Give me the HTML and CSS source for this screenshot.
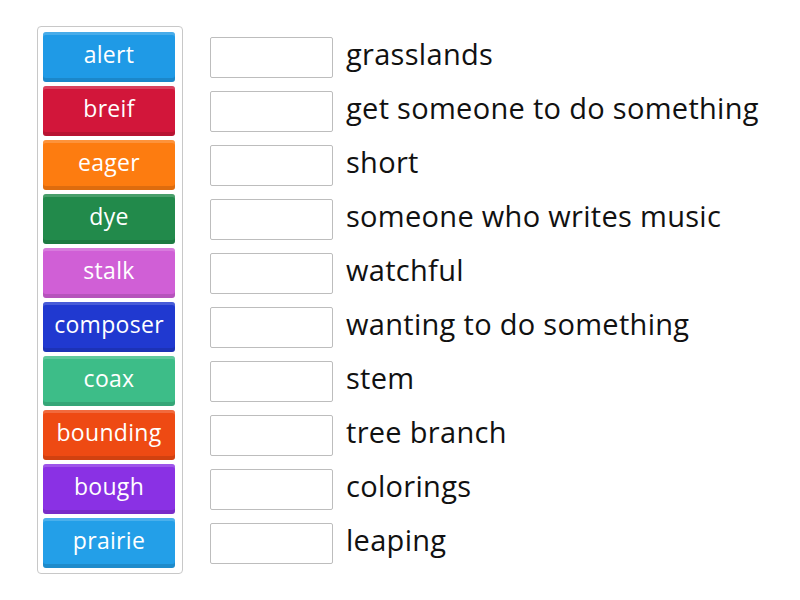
FILE: index.html
```html
<!DOCTYPE html>
<html>
<head>
<meta charset="utf-8">
<link rel="stylesheet" href="styles.css">
</head>
<body>
<div class="game">
  <div class="bank">
    <div class="tile t-blue">alert</div>
    <div class="tile t-red">breif</div>
    <div class="tile t-orange">eager</div>
    <div class="tile t-green">dye</div>
    <div class="tile t-pink">stalk</div>
    <div class="tile t-navy">composer</div>
    <div class="tile t-teal">coax</div>
    <div class="tile t-vermil">bounding</div>
    <div class="tile t-purple">bough</div>
    <div class="tile t-sky">prairie</div>
  </div>
  <div class="rows">
    <div class="row"><div class="slot"></div><div class="def">grasslands</div></div>
    <div class="row"><div class="slot"></div><div class="def">get someone to do something</div></div>
    <div class="row"><div class="slot"></div><div class="def">short</div></div>
    <div class="row"><div class="slot"></div><div class="def">someone who writes music</div></div>
    <div class="row"><div class="slot"></div><div class="def">watchful</div></div>
    <div class="row"><div class="slot"></div><div class="def">wanting to do something</div></div>
    <div class="row"><div class="slot"></div><div class="def">stem</div></div>
    <div class="row"><div class="slot"></div><div class="def">tree branch</div></div>
    <div class="row"><div class="slot"></div><div class="def">colorings</div></div>
    <div class="row"><div class="slot"></div><div class="def">leaping</div></div>
  </div>
</div>
</body>
</html>
```
FILE: styles.css
```css
html, body {
  margin: 0;
  padding: 0;
  background: #fff;
}
body {
  font-family: "Open Sans", "Lato", sans-serif;
}
.game {
  display: flex;
  align-items: flex-start;
  padding: 26px 0 0 37px;
}
.bank {
  display: flex;
  flex-direction: column;
  gap: 4px;
  padding: 5px 7px 5px 5px;
  border: 1px solid #c8c8c8;
  border-radius: 4px;
}
.tile {
  width: 132px;
  height: 50px;
  box-sizing: border-box;
  border-radius: 3px;
  color: #fff;
  font-size: 23px;
  letter-spacing: 0.3px;
  line-height: 1;
  padding-bottom: 5px;
  display: flex;
  align-items: center;
  justify-content: center;
  box-shadow: inset 0 3px 0 rgba(255,255,255,0.18), inset 0 -4px 0 rgba(0,0,0,0.12);
}
.t-blue { background: #1f9ae6; }
.t-red { background: #d2163a; }
.t-orange { background: #fd7c10; }
.t-green { background: #228a4b; }
.t-pink { background: #d05fd6; }
.t-navy { background: #2039d0; }
.t-teal { background: #3dbd88; }
.t-vermil { background: #ee4a13; }
.t-purple { background: #8a31e4; }
.t-sky { background: #239fe8; }
.rows {
  display: flex;
  flex-direction: column;
  gap: 4px;
  margin-left: 27px;
  padding-top: 6px;
}
.row {
  height: 50px;
  display: flex;
  align-items: center;
}
.slot {
  width: 123px;
  height: 41px;
  box-sizing: border-box;
  border: 1px solid #bdbdbd;
  border-radius: 2px;
  background: #fff;
}
.def {
  margin-left: 13px;
  font-size: 29px;
  letter-spacing: 0.3px;
  line-height: 1;
  padding-bottom: 7px;
  color: #111;
  white-space: nowrap;
}
```
